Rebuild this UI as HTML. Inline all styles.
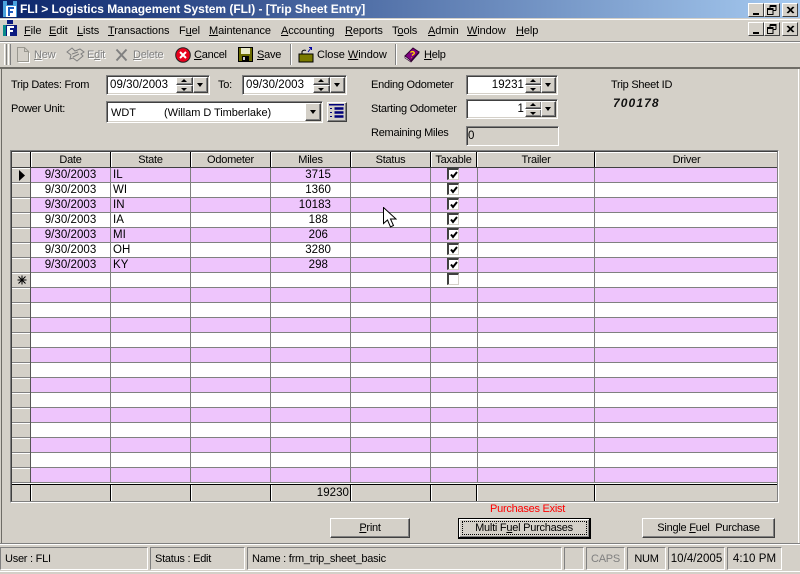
<!DOCTYPE html>
<html><head><meta charset="utf-8"><title>FLI</title>
<style>
html,body{margin:0;padding:0}
body{width:800px;height:574px;position:relative;overflow:hidden;background:#d4d0c8;font-family:"Liberation Sans",sans-serif;font-size:11px;letter-spacing:-.25px;color:#000}
div,svg,span.a{position:absolute}
.t{position:absolute;white-space:nowrap;line-height:14px}
.g{color:#808080;text-shadow:1px 1px 0 #fff}
.m{top:24px;letter-spacing:-.1px}
.c{text-align:center}
.r{text-align:right}
.d{font-size:11.5px;letter-spacing:.05px}
.wb{width:16px;height:14px;background:#d4d0c8;border:1px solid;border-color:#fff #404040 #404040 #fff;box-sizing:border-box}
.sunk{box-sizing:border-box;border:1px solid;border-color:#808080 #fff #fff #808080;box-shadow:inset 1px 1px 0 #404040,inset -1px -1px 0 #d4d0c8;background:#fff}
.sb{box-sizing:border-box;background:#d4d0c8;border:1px solid;border-color:#fff #404040 #404040 #fff;box-shadow:inset -1px -1px 0 #808080}
.tri{width:0;height:0;border-left:3px solid transparent;border-right:3px solid transparent;border-top:4px solid #000}
.v{top:168px;width:1px;height:315px;background:#808080}
.fv{top:485px;width:1px;height:16px;background:#000;box-shadow:1px 0 0 #fff}
.hv{top:152px;width:1px;height:15px;background:#000;box-shadow:1px 0 0 #fff}
.h{top:153px;height:14px;text-align:center;line-height:15px}
.cell{position:absolute;white-space:nowrap;line-height:14px;font-size:11.5px;letter-spacing:.05px}
.cb{left:447px;width:12px;height:12px;box-sizing:border-box;border:1px solid;border-color:#808080 #d4d0c8 #d4d0c8 #808080;border-top:2px solid #404040;border-left:2px solid #404040;background:#fff}
.btn{box-sizing:border-box;background:#d4d0c8;border:1px solid;border-color:#fff #404040 #404040 #fff;box-shadow:inset -1px -1px 0 #808080;text-align:center;line-height:18px;white-space:nowrap}
.p{top:547px;height:23px;box-sizing:border-box;border:1px solid;border-color:#808080 #fff #fff #808080;line-height:22px;white-space:nowrap;padding-left:4px}
u{text-decoration:underline}
</style></head><body>

<!-- title bar -->
<div style="left:0;top:0;width:800px;height:18px;background:linear-gradient(90deg,#0a246a,#a6caf0)"></div>
<svg style="left:2px;top:0" width="17" height="18" viewBox="0 0 17 18"><rect x="1" y="1" width="14" height="16" fill="#4aa3df"/><rect x="5" y="1" width="6" height="4" fill="#0a246a"/><rect x="4" y="6" width="10" height="11" fill="#fff"/><path d="M6 7h6v2H8v2h3v2H8v3H6z" fill="#1f5fbf"/></svg>
<div class="t" style="left:20px;top:2px;color:#fff;font-weight:bold;font-size:12px;letter-spacing:-.03px">FLI &gt; Logistics Management System (FLI) - [Trip Sheet Entry]</div>
<div class="wb" style="left:748px;top:3px"><div style="left:4px;top:9px;width:6px;height:2px;background:#000"></div></div>
<div class="wb" style="left:764px;top:3px"><svg style="left:2px;top:1px" width="10" height="10"><path d="M3 .5h6v5M3 1.5h6M.5 3.5h5.500v6h-5.500zM.5 4.500h5.500M3 .5v3M6 5.500h3" fill="none" stroke="#000"/></svg></div>
<div class="wb" style="left:782px;top:3px"><svg style="left:3px;top:2px" width="9" height="9"><path d="M1 1l6 6M2 1l6 6M7 1L1 7M8 1L2 7" stroke="#000" stroke-width="1" fill="none"/></svg></div>
<div style="left:0;top:18px;width:800px;height:1px;background:#d4d0c8"></div>
<div style="left:0;top:19px;width:800px;height:1px;background:#fff"></div>

<!-- menu -->
<svg style="left:2px;top:20px" width="16" height="17" viewBox="0 0 16 17"><rect x="5" y="0" width="6" height="4" fill="#0a1a80"/><rect x="1" y="5" width="14" height="11" fill="#0a1a80"/><rect x="1" y="5" width="3" height="11" fill="#0a8a8a"/><path d="M5 6h7v2H8v2h3v2H8v4H5z" fill="#fff"/></svg>
<div class="t m" style="left:24px"><u>F</u>ile</div>
<div class="t m" style="left:49px"><u>E</u>dit</div>
<div class="t m" style="left:77px"><u>L</u>ists</div>
<div class="t m" style="left:108px"><u>T</u>ransactions</div>
<div class="t m" style="left:179px">F<u>u</u>el</div>
<div class="t m" style="left:209px"><u>M</u>aintenance</div>
<div class="t m" style="left:281px"><u>A</u>ccounting</div>
<div class="t m" style="left:345px"><u>R</u>eports</div>
<div class="t m" style="left:392px">T<u>o</u>ols</div>
<div class="t m" style="left:428px"><u>A</u>dmin</div>
<div class="t m" style="left:467px"><u>W</u>indow</div>
<div class="t m" style="left:516px"><u>H</u>elp</div>
<div class="wb" style="left:748px;top:22px"><div style="left:4px;top:9px;width:6px;height:2px;background:#000"></div></div>
<div class="wb" style="left:764px;top:22px"><svg style="left:2px;top:1px" width="10" height="10"><path d="M3 .5h6v5M3 1.5h6M.5 3.500h5.500v6h-5.500zM.5 4.500h5.500M3 .5v3M6 5.500h3" fill="none" stroke="#000"/></svg></div>
<div class="wb" style="left:782px;top:22px"><svg style="left:3px;top:2px" width="9" height="9"><path d="M1 1l6 6M2 1l6 6M7 1L1 7M8 1L2 7" stroke="#000" fill="none"/></svg></div>
<div style="left:0;top:41px;width:800px;height:1px;background:#808080"></div>
<div style="left:0;top:42px;width:800px;height:1px;background:#fff"></div>

<!-- toolbar -->
<div style="left:4px;top:44px;width:1px;height:21px;background:#fff;box-shadow:1px 0 0 #d4d0c8,2px 0 0 #808080"></div>
<div style="left:8px;top:44px;width:1px;height:21px;background:#fff;box-shadow:1px 0 0 #d4d0c8,2px 0 0 #808080"></div>
<svg style="left:16px;top:47px" width="14" height="16"><path d="M1.500.5h7l4 4v10h-11zM8.500.5v4h4" fill="none" stroke="#9a9890"/><path d="M2.500 15.500h11V6" fill="none" stroke="#fff"/></svg>
<div class="t g" style="left:34px;top:48px"><u>N</u>ew</div>
<svg style="left:66px;top:46px" width="20" height="17"><path d="M1 6l5-4 3 3 5-2 4 3-3 2 2 2-6 5-4-3-3 1 1-4z" fill="#d4d0c8" stroke="#808080"/><path d="M6 8l6-2M7 11l6-3" stroke="#808080"/></svg>
<div class="t g" style="left:87px;top:48px">E<u>d</u>it</div>
<svg style="left:115px;top:48px" width="14" height="14"><path d="M1.500 1.500l10 11M11.500 1.500l-10 11" stroke="#808080" stroke-width="2" fill="none"/></svg>
<div class="t g" style="left:133px;top:48px"><u>D</u>elete</div>
<svg style="left:175px;top:47px" width="16" height="16"><circle cx="8" cy="8" r="7.300" fill="#e8001c" stroke="#222"/><path d="M5 5l6 6M11 5l-6 6" stroke="#fff" stroke-width="2"/></svg>
<div class="t" style="left:194px;top:48px"><u>C</u>ancel</div>
<svg style="left:238px;top:47px" width="15" height="15"><rect x=".5" y=".5" width="14" height="14" fill="#6b6b00" stroke="#000"/><rect x="3" y="1" width="9" height="6" fill="#e8e8c8"/><rect x="4" y="9" width="7" height="5" fill="#000"/><rect x="5" y="10" width="2" height="3" fill="#ccc"/></svg>
<div class="t" style="left:257px;top:48px"><u>S</u>ave</div>
<div style="left:290px;top:44px;width:1px;height:21px;background:#808080;box-shadow:1px 0 0 #fff"></div>
<svg style="left:298px;top:46px" width="16" height="17"><path d="M1 8h14v8H1z" fill="#7a7a00" stroke="#000"/><path d="M4 8V5.500a3 3 0 0 1 4-1" fill="none" stroke="#000"/><path d="M10 6l3-4M11 1.500h2.500V4" fill="none" stroke="#0000a0"/></svg>
<div class="t" style="left:317px;top:48px;letter-spacing:-.05px">Close <u>W</u>indow</div>
<div style="left:395px;top:44px;width:1px;height:21px;background:#808080;box-shadow:1px 0 0 #fff"></div>
<svg style="left:404px;top:47px" width="16" height="16"><path d="M1 9l8-8 6 4-8 9z" fill="#800080" stroke="#300030"/><path d="M1 9v2l6 4 8-9V5l-8 9z" fill="#fff" stroke="#300030" stroke-width=".7"/><path d="M6.500 5.500a2 1.500 0 1 1 2.500 2l-1 1M7.500 10.500h.5" fill="none" stroke="#ffd800" stroke-width="1.300"/></svg>
<div class="t" style="left:424px;top:48px"><u>H</u>elp</div>
<div style="left:0;top:67px;width:800px;height:2px;background:#6e6c66"></div>

<!-- client edges -->
<div style="left:1px;top:69px;width:1px;height:475px;background:#6e6c66"></div>
<div style="left:798px;top:69px;width:1px;height:475px;background:#fff"></div>

<!-- form -->
<div class="t" style="left:11px;top:78px">Trip Dates: From</div>
<div class="sunk" style="left:106px;top:75px;width:104px;height:20px"></div>
<div class="t d" style="left:110px;top:78px">09/30/2003</div>
<div class="sb" style="left:176px;top:77px;width:17px;height:8px"></div><div class="tri" style="left:181px;top:79px;border-top:0;border-bottom:3px solid #000"></div>
<div class="sb" style="left:176px;top:85px;width:17px;height:8px"></div><div class="tri" style="left:181px;top:88px;border-top-width:3px"></div>
<div class="sb" style="left:193px;top:77px;width:15px;height:16px"></div><div class="tri" style="left:197px;top:83px"></div>
<div class="t" style="left:218px;top:78px">To:</div>
<div class="sunk" style="left:242px;top:75px;width:105px;height:20px"></div>
<div class="t d" style="left:246px;top:78px">09/30/2003</div>
<div class="sb" style="left:313px;top:77px;width:17px;height:8px"></div><div class="tri" style="left:318px;top:79px;border-top:0;border-bottom:3px solid #000"></div>
<div class="sb" style="left:313px;top:85px;width:17px;height:8px"></div><div class="tri" style="left:318px;top:88px;border-top-width:3px"></div>
<div class="sb" style="left:330px;top:77px;width:15px;height:16px"></div><div class="tri" style="left:334px;top:83px"></div>

<div class="t" style="left:11px;top:102px">Power Unit:</div>
<div class="sunk" style="left:106px;top:101px;width:217px;height:22px"></div>
<div class="t" style="left:111px;top:106px;letter-spacing:-.05px">WDT</div>
<div class="t" style="left:164px;top:106px;letter-spacing:-.05px">(Willam D Timberlake)</div>
<div class="sb" style="left:305px;top:103px;width:16px;height:18px"></div><div class="tri" style="left:310px;top:110px"></div>
<div class="sb" style="left:327px;top:102px;width:20px;height:20px"></div>
<svg style="left:329px;top:104px" width="16" height="16"><path d="M0 .5h15" stroke="#00007a" stroke-width="2"/><path d="M5.500 4.500h9M5.500 8.500h9M5.500 12.500h9" stroke="#00007a" stroke-width="2.500"/><path d="M1 4.500h2M1 8.500h2M1 12.500h2" stroke="#00007a"/></svg>

<div class="t" style="left:371px;top:78px">Ending Odometer</div>
<div class="sunk" style="left:466px;top:75px;width:92px;height:20px"></div>
<div class="t r d" style="left:470px;top:78px;width:54px">19231</div>
<div class="sb" style="left:525px;top:77px;width:17px;height:8px"></div><div class="tri" style="left:530px;top:79px;border-top:0;border-bottom:3px solid #000"></div>
<div class="sb" style="left:525px;top:85px;width:17px;height:8px"></div><div class="tri" style="left:530px;top:88px;border-top-width:3px"></div>
<div class="sb" style="left:541px;top:77px;width:15px;height:16px"></div><div class="tri" style="left:545px;top:83px"></div>

<div class="t" style="left:371px;top:102px">Starting Odometer</div>
<div class="sunk" style="left:466px;top:99px;width:92px;height:20px"></div>
<div class="t r d" style="left:470px;top:102px;width:54px">1</div>
<div class="sb" style="left:525px;top:101px;width:17px;height:8px"></div><div class="tri" style="left:530px;top:103px;border-top:0;border-bottom:3px solid #000"></div>
<div class="sb" style="left:525px;top:109px;width:17px;height:8px"></div><div class="tri" style="left:530px;top:112px;border-top-width:3px"></div>
<div class="sb" style="left:541px;top:101px;width:15px;height:16px"></div><div class="tri" style="left:545px;top:107px"></div>

<div class="t" style="left:371px;top:126px">Remaining Miles</div>
<div class="sunk" style="left:466px;top:126px;width:93px;height:20px;background:#d4d0c8"></div>
<div class="t d" style="left:468px;top:129px">0</div>

<div class="t" style="left:611px;top:78px">Trip Sheet ID</div>
<div class="t" style="left:613px;top:96px;font-weight:bold;font-style:italic;font-size:12px;letter-spacing:1.1px;color:#111">700178</div>

<!-- grid -->
<div style="left:10px;top:150px;width:769px;height:353px;box-sizing:border-box;border:1px solid;border-color:#808080 #fff #fff #808080"></div>
<div style="left:11px;top:151px;width:767px;height:351px;box-sizing:border-box;border:1px solid;border-color:#404040 #808080 #808080 #404040"></div>
<div style="left:12px;top:152px;width:765px;height:1px;background:#fff"></div>
<div style="left:31px;top:168px;width:746px;height:315px;background:repeating-linear-gradient(180deg,#eec5fc 0 14px,#808080 14px 15px,#fff 15px 29px,#808080 29px 30px)"></div>
<div style="left:12px;top:168px;width:18px;height:315px;background:repeating-linear-gradient(180deg,#fff 0 1px,#d4d0c8 1px 14px,#808080 14px 15px)"></div>
<div style="left:12px;top:167px;width:765px;height:1px;background:#404040"></div>
<div style="left:12px;top:483px;width:765px;height:1px;background:#fff"></div>
<div style="left:12px;top:484px;width:765px;height:1px;background:#000"></div>
<div class="v" style="left:30px;background:#555"></div><div class="v" style="left:110px"></div><div class="v" style="left:190px"></div><div class="v" style="left:270px"></div><div class="v" style="left:350px"></div><div class="v" style="left:430px"></div><div class="v" style="left:477px"></div><div class="v" style="left:594px"></div>
<div class="hv" style="left:30px"></div><div class="hv" style="left:110px"></div><div class="hv" style="left:190px"></div><div class="hv" style="left:270px"></div><div class="hv" style="left:350px"></div><div class="hv" style="left:430px"></div><div class="hv" style="left:476px"></div><div class="hv" style="left:594px"></div>
<div class="fv" style="left:30px"></div><div class="fv" style="left:110px"></div><div class="fv" style="left:190px"></div><div class="fv" style="left:270px"></div><div class="fv" style="left:350px"></div><div class="fv" style="left:430px"></div><div class="fv" style="left:476px"></div><div class="fv" style="left:594px"></div>
<div style="left:12px;top:501px;width:765px;height:1px;background:#808080"></div>

<div class="h" style="left:31px;width:79px">Date</div>
<div class="h" style="left:111px;width:79px">State</div>
<div class="h" style="left:191px;width:79px">Odometer</div>
<div class="h" style="left:271px;width:79px">Miles</div>
<div class="h" style="left:351px;width:79px">Status</div>
<div class="h" style="left:431px;width:45px">Taxable</div>
<div class="h" style="left:478px;width:116px">Trailer</div>
<div class="h" style="left:596px;width:181px">Driver</div>

<svg style="left:18px;top:170px" width="8" height="11"><path d="M1 0l6 5.500-6 5.500z" fill="#000"/></svg>
<svg style="left:17px;top:275px" width="10" height="10"><path d="M5 .5v9M.5 5h9M1.500 1.500l7 7M8.500 1.500l-7 7" stroke="#000" fill="none"/></svg>

<div class="cell c" style="left:31px;top:168px;width:79px">9/30/2003</div><div class="cell" style="left:113px;top:168px">IL</div><div class="cell r" style="left:271px;top:168px;width:60px">3715</div>
<div class="cell c" style="left:31px;top:183px;width:79px">9/30/2003</div><div class="cell" style="left:113px;top:183px">WI</div><div class="cell r" style="left:271px;top:183px;width:60px">1360</div>
<div class="cell c" style="left:31px;top:198px;width:79px">9/30/2003</div><div class="cell" style="left:113px;top:198px">IN</div><div class="cell r" style="left:271px;top:198px;width:60px">10183</div>
<div class="cell c" style="left:31px;top:213px;width:79px">9/30/2003</div><div class="cell" style="left:113px;top:213px">IA</div><div class="cell r" style="left:271px;top:213px;width:57px">188</div>
<div class="cell c" style="left:31px;top:228px;width:79px">9/30/2003</div><div class="cell" style="left:113px;top:228px">MI</div><div class="cell r" style="left:271px;top:228px;width:57px">206</div>
<div class="cell c" style="left:31px;top:243px;width:79px">9/30/2003</div><div class="cell" style="left:113px;top:243px">OH</div><div class="cell r" style="left:271px;top:243px;width:60px">3280</div>
<div class="cell c" style="left:31px;top:258px;width:79px">9/30/2003</div><div class="cell" style="left:113px;top:258px">KY</div><div class="cell r" style="left:271px;top:258px;width:57px">298</div>
<div class="cell r" style="left:271px;top:486px;width:78px">19230</div>

<div class="cb" style="top:168px"><svg style="left:1px;top:1px" width="8" height="8"><path d="M1 3.500l2 2.500 4-5" stroke="#000" stroke-width="2" fill="none"/></svg></div>
<div class="cb" style="top:183px"><svg style="left:1px;top:1px" width="8" height="8"><path d="M1 3.500l2 2.500 4-5" stroke="#000" stroke-width="2" fill="none"/></svg></div>
<div class="cb" style="top:198px"><svg style="left:1px;top:1px" width="8" height="8"><path d="M1 3.500l2 2.500 4-5" stroke="#000" stroke-width="2" fill="none"/></svg></div>
<div class="cb" style="top:213px"><svg style="left:1px;top:1px" width="8" height="8"><path d="M1 3.500l2 2.500 4-5" stroke="#000" stroke-width="2" fill="none"/></svg></div>
<div class="cb" style="top:228px"><svg style="left:1px;top:1px" width="8" height="8"><path d="M1 3.500l2 2.500 4-5" stroke="#000" stroke-width="2" fill="none"/></svg></div>
<div class="cb" style="top:243px"><svg style="left:1px;top:1px" width="8" height="8"><path d="M1 3.500l2 2.500 4-5" stroke="#000" stroke-width="2" fill="none"/></svg></div>
<div class="cb" style="top:258px"><svg style="left:1px;top:1px" width="8" height="8"><path d="M1 3.500l2 2.500 4-5" stroke="#000" stroke-width="2" fill="none"/></svg></div>
<div class="cb" style="top:273px"></div>

<svg style="left:383px;top:207px" width="14" height="22"><path d="M.5.500v16l4-3.500 3 7 3-1.500-3-6.500h5.500z" fill="#fff" stroke="#000"/></svg>

<!-- buttons -->
<div class="t" style="left:490px;top:502px;color:#f00">Purchases Exist</div>
<div class="btn" style="left:330px;top:518px;width:80px;height:20px"><u>P</u>rint</div>
<div class="btn" style="left:458px;top:518px;width:133px;height:21px;border:1px solid #000;border-right-width:2px;border-bottom-width:2px;box-shadow:inset 1px 1px 0 #fff,inset -1px -1px 0 #808080">Multi F<u>u</u>el Purchases</div>
<div style="left:462px;top:521px;width:125px;height:14px;box-sizing:border-box;border:1px dotted #000"></div>
<div class="btn" style="left:642px;top:518px;width:133px;height:20px">Single <u>F</u>uel&nbsp; Purchase</div>

<!-- status bar -->
<div style="left:0;top:543px;width:800px;height:1px;background:#808080"></div>
<div style="left:0;top:544px;width:800px;height:1px;background:#fff"></div>
<div class="p" style="left:0;width:148px">User : FLI</div>
<div class="p" style="left:150px;width:95px">Status : Edit</div>
<div class="p" style="left:247px;width:315px">Name : frm_trip_sheet_basic</div>
<div class="p" style="left:564px;width:20px"></div>
<div class="p c" style="left:586px;width:39px;padding:0;color:#808080">CAPS</div>
<div class="p c" style="left:627px;width:39px;padding:0">NUM</div>
<div class="p c d" style="left:668px;width:57px;padding:0">10/4/2005</div>
<div class="p c d" style="left:727px;width:55px;padding:0">4:10 PM</div>
<div style="left:0;top:571px;width:800px;height:1px;background:#fff"></div>
</body></html>
